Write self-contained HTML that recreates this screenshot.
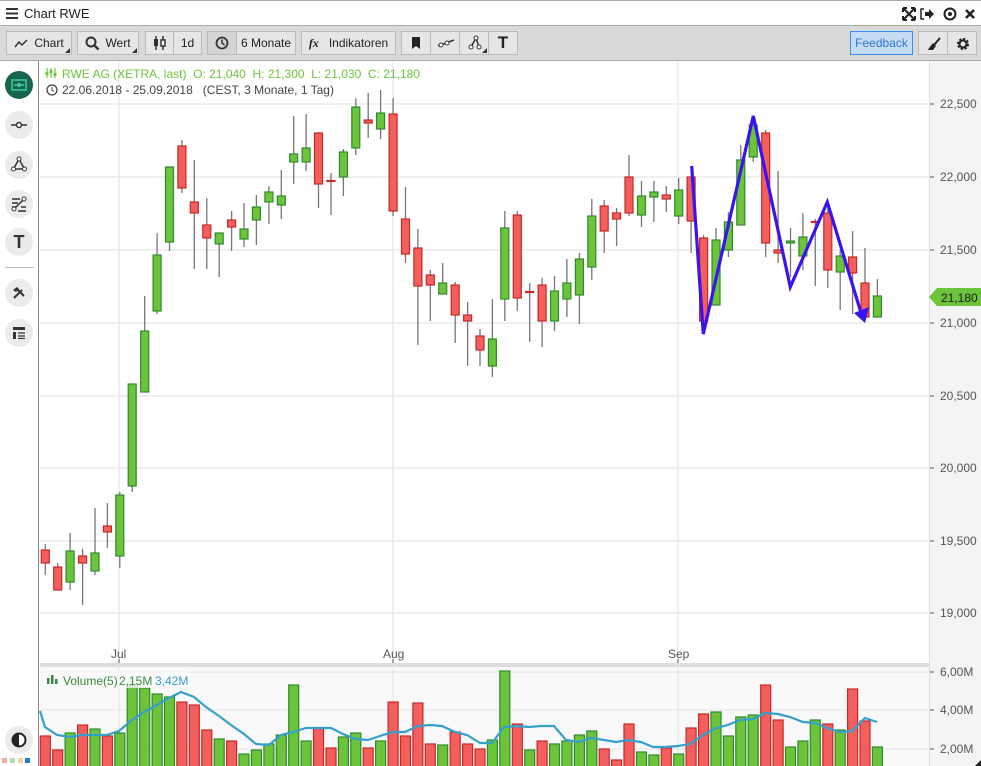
<!DOCTYPE html>
<html><head><meta charset="utf-8"><style>
*{margin:0;padding:0;box-sizing:border-box}
body{width:981px;height:766px;overflow:hidden;background:#fff;font-family:"Liberation Sans",sans-serif;position:relative}
.title{position:absolute;left:0;top:0;width:981px;height:26px;border-top:1px solid #aaa;border-bottom:1px solid #aaa;background:#fff}
.title span{position:absolute;left:24px;top:5px;font-size:13px;color:#222}
.tb{position:absolute;left:0;top:26px;width:981px;height:35px;background:#d9d9d9;border-bottom:1px solid #aaa}
.b{position:absolute;top:5px;height:24px;border:1px solid #bbb;background:#e6e6e6;font-size:12px;color:#222;line-height:22px;text-align:center}
.tri:after{content:"";position:absolute;right:1px;bottom:1px;border-left:5px solid transparent;border-bottom:5px solid #333}
.side{position:absolute;left:0;top:61px;width:39px;height:705px;background:#fff;border-right:1px solid #888}
.ci{position:absolute;left:5px;width:28px;height:28px;border-radius:50%;background:#ebebeb}
</style></head><body>
<div class="title">
<svg style="position:absolute;left:6px;top:7px" width="12" height="11"><rect y="0" width="12" height="2" fill="#333"/><rect y="4.5" width="12" height="2" fill="#333"/><rect y="9" width="12" height="2" fill="#333"/></svg>
<span>Chart RWE</span>
<svg style="position:absolute;left:902px;top:6px" width="76" height="14">
<g stroke="#222" stroke-width="2" fill="none"><path d="M2 2l10 10M12 2L2 12"/><path d="M1 1h4M1 1v4M13 1h-4M13 1v4M1 13h4M1 13v-4M13 13h-4M13 13v-4"/></g>
<path d="M22 2h-3v10h3" stroke="#222" stroke-width="1.5" fill="none"/><path d="M23 5h4v-3l5 5-5 5v-3h-4z" fill="#222"/>
<circle cx="48" cy="7" r="5.5" stroke="#222" stroke-width="2" fill="none"/><circle cx="48" cy="7" r="2" fill="#222"/>
<path d="M64 3l8 8M72 3l-8 8" stroke="#222" stroke-width="2.5"/>
</svg>
</div>
<div class="tb">
<div class="b tri" style="left:6px;width:66px"><svg style="position:absolute;left:7px;top:7px" width="14" height="9"><path d="M1 8l4-5 3 3 5-5" stroke="#333" stroke-width="1.5" fill="none"/></svg><span style="margin-left:20px">Chart</span></div>
<div class="b tri" style="left:77px;width:62px"><svg style="position:absolute;left:7px;top:4px" width="15" height="15"><circle cx="6" cy="6" r="4.5" stroke="#333" stroke-width="2" fill="none"/><path d="M9 9l4.5 4.5" stroke="#333" stroke-width="2.5"/></svg><span style="margin-left:20px">Wert</span></div>
<div class="b" style="left:145px;width:29px"><svg style="position:absolute;left:6px;top:4px" width="16" height="14"><path d="M4 0v14M11 0v14" stroke="#333" stroke-width="1.5"/><rect x="2" y="3" width="4" height="7" fill="#333"/><rect x="9" y="4" width="4" height="6" fill="#fff" stroke="#333" stroke-width="1.5"/></svg></div>
<div class="b" style="left:173px;width:29px">1d</div>
<div class="b" style="left:207px;width:30px;background:#d4d4d4"><svg style="position:absolute;left:7px;top:4px" width="14" height="14"><circle cx="7" cy="7" r="5.5" stroke="#333" stroke-width="1.8" fill="none"/><path d="M7 3.5v3.5l2.5 2" stroke="#333" stroke-width="1.5" fill="none"/></svg></div>
<div class="b" style="left:236px;width:60px">6 Monate</div>
<div class="b" style="left:301px;width:95px"><i style="font-family:'Liberation Serif',serif;font-weight:bold;margin-right:10px">fx</i>Indikatoren</div>
<div class="b" style="left:401px;width:30px"><svg style="position:absolute;left:10px;top:5px" width="9" height="12"><path d="M0 0h8v12l-4-3-4 3z" fill="#222"/></svg></div>
<div class="b" style="left:430px;width:30px"><svg style="position:absolute;left:6px;top:6px" width="18" height="10"><path d="M1 8l16-6" stroke="#333" stroke-width="1.5"/><circle cx="4" cy="7" r="2" fill="#fff" stroke="#333"/><circle cx="10" cy="5" r="2" fill="#fff" stroke="#333"/></svg></div>
<div class="b tri" style="left:459px;width:30px"><svg style="position:absolute;left:8px;top:3px" width="14" height="16"><path d="M8 3l-5 9M8 3l3 9" stroke="#333" stroke-width="1.5"/><circle cx="8" cy="3" r="2" fill="#fff" stroke="#333"/><circle cx="3" cy="12" r="2" fill="#fff" stroke="#333"/><circle cx="11" cy="12" r="2" fill="#fff" stroke="#333"/></svg></div>
<div class="b" style="left:488px;width:30px;font-weight:bold;font-size:17px">T</div>
<div class="b" style="left:850px;width:63px;background:#c6dcf2;border-color:#3a92f0;color:#2a78d8">Feedback</div>
<div class="b" style="left:918px;width:30px"><svg style="position:absolute;left:8px;top:5px" width="14" height="14"><path d="M13 1L7 8" stroke="#222" stroke-width="2"/><path d="M6 6l3 3-3 4-5 0 1-2z" fill="#222"/></svg></div>
<div class="b" style="left:947px;width:30px"><svg style="position:absolute;left:8px;top:5px" width="14" height="14"><circle cx="7" cy="7" r="4.5" fill="none" stroke="#222" stroke-width="3" stroke-dasharray="2.2 1.3"/><circle cx="7" cy="7" r="3.5" fill="none" stroke="#222" stroke-width="2"/></svg></div>
</div>
<div class="side">
<div class="ci" style="top:10px;background:#17654e"><svg style="position:absolute;left:6px;top:8px" width="16" height="12"><rect x="1" y="1" width="14" height="10" fill="none" stroke="#3ec99a" stroke-width="1.5"/><path d="M3 6h10" stroke="#3ec99a" stroke-width="1.5"/><circle cx="8" cy="6" r="2" fill="#3ec99a"/></svg></div>
<div class="ci" style="top:50px"><svg style="position:absolute;left:5px;top:9px" width="18" height="10"><path d="M1 5h16" stroke="#333" stroke-width="1.5"/><circle cx="9" cy="5" r="2.5" fill="#fff" stroke="#333" stroke-width="1.5"/></svg></div>
<div class="ci" style="top:90px"><svg style="position:absolute;left:6px;top:5px" width="16" height="16"><path d="M8 3L2.5 13h11z" fill="none" stroke="#333" stroke-width="1.5"/><circle cx="8" cy="3" r="2" fill="#fff" stroke="#333"/><circle cx="2.5" cy="13" r="2" fill="#fff" stroke="#333"/><circle cx="13.5" cy="13" r="2" fill="#fff" stroke="#333"/></svg></div>
<div class="ci" style="top:129px"><svg style="position:absolute;left:6px;top:6px" width="16" height="16"><path d="M1 3h8M1 7h6M1 11h4M7 15h8M10 11h5" stroke="#333" stroke-width="1.5"/><path d="M3 13L13 3" stroke="#333" stroke-width="1.5"/><circle cx="13" cy="3" r="2" fill="#fff" stroke="#333"/><circle cx="3" cy="13" r="2" fill="#fff" stroke="#333"/></svg></div>
<div class="ci" style="top:167px;font-weight:bold;font-size:18px;text-align:center;line-height:28px;color:#333">T</div>
<div style="position:absolute;left:5px;top:206px;width:29px;border-top:1px solid #bbb"></div>
<div class="ci" style="top:218px"><svg style="position:absolute;left:7px;top:7px" width="14" height="14"><path d="M2 12L10 4M4 2l8 8" stroke="#333" stroke-width="2"/><path d="M1 4l4-3 2 2-3 3z" fill="#333"/></svg></div>
<div class="ci" style="top:258px"><svg style="position:absolute;left:8px;top:8px" width="12" height="12"><rect x="0" y="0" width="12" height="3" fill="#333"/><rect x="0" y="5" width="3" height="7" fill="#333"/><path d="M5 6h7M5 9h7M5 11.5h7" stroke="#333" stroke-width="1.3"/></svg></div>
<div class="ci" style="top:665px"><svg style="position:absolute;left:6px;top:6px" width="16" height="16"><circle cx="8" cy="8" r="6.5" fill="#fff" stroke="#222" stroke-width="2"/><path d="M8 1.5a6.5 6.5 0 0 0 0 13z" fill="#222"/></svg></div>
</div>
<svg style="position:absolute;left:0;top:0" width="981" height="766">
<rect x="40" y="61" width="889" height="602" fill="#fff"/>
<rect x="929" y="61" width="52" height="705" fill="#f4f4f4"/>
<line x1="929.5" y1="61" x2="929.5" y2="766" stroke="#ddd"/>
<g stroke="#eaeaea" stroke-width="1.5">
<path d="M40 104H929M40 177H929M40 250H929M40 323H929M40 396H929M40 468H929M40 541H929M40 613H929"/>
<path d="M119 61V663M393 61V663M678 61V663"/>
</g>
<g fill="#555" font-size="12"><text x="940" y="108">22,500</text><text x="940" y="181">22,000</text><text x="940" y="254">21,500</text><text x="940" y="400">20,500</text><text x="940" y="472">20,000</text><text x="940" y="545">19,500</text><text x="940" y="617">19,000</text><text x="940" y="327">21,000</text>
<text x="111" y="658">Jul</text><text x="383" y="658">Aug</text><text x="668" y="658">Sep</text></g>
<g stroke="#555"><path d="M930 104h4M930 177h4M930 250h4M930 323h4M930 396h4M930 468h4M930 541h4M930 613h4M119 659v4M393 659v4M678 659v4"/></g>
<path d="M929 297l8-9h44v18h-44z" fill="#6cc43a"/><text x="941" y="302" font-size="12" fill="#1a1a1a">21,180</text>
<g fill="#6cc43a" font-size="12"><text x="62" y="78">RWE AG (XETRA, last)&#160; O: 21,040&#160; H: 21,300&#160; L: 21,030&#160; C: 21,180</text></g>
<g stroke="#6cc43a" stroke-width="1.2"><path d="M47 68v10M51 68v10M55 68v10"/></g><g fill="#6cc43a"><rect x="45.5" y="72" width="3" height="3"/><rect x="49.5" y="70" width="3" height="3"/><rect x="53.5" y="73" width="3" height="3"/></g>
<circle cx="52" cy="90" r="5" fill="none" stroke="#444" stroke-width="1.3"/><path d="M52 87v3l2 1.5" stroke="#444" fill="none"/>
<text x="62" y="94" font-size="12" fill="#444">22.06.2018 - 25.09.2018&#160;&#160; (CEST, 3 Monate, 1 Tag)</text>
<g stroke="#777" stroke-width="1.3">
<path d="M45.3 544V575M57.7 563V590M70.1 533V590M82.6 549V605M95 508V575M107.4 503V548M119.8 492V568M132.2 384V492M144.7 296V392M157.1 233V314M169.5 167V251M181.9 140V193M194.3 160V269M206.8 198V269M219.2 233V277M231.6 211V251M244 203V247M256.4 195V245M268.9 186V224M281.3 170V219M293.7 116V184M306.1 114V171M318.5 132V208M331 173V215M343.4 149V196M355.8 98V155M368.2 93V138M380.6 90V139M393.1 98V216M405.5 187V263M417.9 229V345M430.3 270V321M442.7 263V294M455.2 282V343M467.6 302V366M480 329V366M492.4 299V377M504.8 211V321M517.3 211V311M529.7 283V342M542.1 278V347M554.5 276V331M566.9 259V317M579.4 253V324M591.8 199V280M604.2 200V253M616.6 208V246M629 155V216M641.5 181V227M653.9 181V222M666.3 186V212M678.7 178V224M691.1 177V253M703.6 235V321M716 228V305M728.4 212V257M740.8 145V225M753.2 125V162M765.7 130V257M778.1 171V263M790.5 228V277M802.9 213V270M815.3 219V286M827.8 208V288M840.2 250V310M852.6 231V314M865 248V317M877.4 279V317"/>
</g>
<g fill="#f25f5c" stroke="#c62828" stroke-width="1.2">
<rect x="41.3" y="550" width="8" height="13"/><rect x="53.7" y="567" width="8" height="23"/><rect x="78.6" y="556" width="8" height="7"/><rect x="103.4" y="526" width="8" height="6"/><rect x="177.9" y="146" width="8" height="42"/><rect x="190.3" y="202" width="8" height="11"/><rect x="202.8" y="225" width="8" height="13"/><rect x="227.6" y="220" width="8" height="7"/><rect x="314.5" y="133" width="8" height="51"/><rect x="327" y="180.5" width="8" height="1"/><rect x="364.2" y="120" width="8" height="3"/><rect x="389.1" y="114" width="8" height="97"/><rect x="401.5" y="219" width="8" height="35"/><rect x="413.9" y="248" width="8" height="38"/><rect x="426.3" y="275" width="8" height="10"/><rect x="451.2" y="285" width="8" height="30"/><rect x="463.6" y="315" width="8" height="6"/><rect x="476" y="336" width="8" height="14"/><rect x="513.3" y="215" width="8" height="83"/><rect x="525.7" y="291.5" width="8" height="1"/><rect x="538.1" y="285" width="8" height="36"/><rect x="600.2" y="206" width="8" height="25"/><rect x="612.6" y="213" width="8" height="6"/><rect x="625" y="177" width="8" height="36"/><rect x="662.3" y="195" width="8" height="4"/><rect x="687.1" y="177" width="8" height="44"/><rect x="699.6" y="238" width="8" height="83"/><rect x="761.7" y="133" width="8" height="110"/><rect x="774.1" y="250" width="8" height="3"/><rect x="811.3" y="221.5" width="8" height="1"/><rect x="823.8" y="213" width="8" height="57"/><rect x="848.6" y="257" width="8" height="16"/><rect x="861" y="283" width="8" height="34"/>
</g>
<g fill="#6cc43a" stroke="#2e8b2e" stroke-width="1.2">
<rect x="66.1" y="551" width="8" height="31"/><rect x="91" y="553" width="8" height="18"/><rect x="115.8" y="495" width="8" height="61"/><rect x="128.2" y="384" width="8" height="102"/><rect x="140.7" y="331" width="8" height="61"/><rect x="153.1" y="255" width="8" height="56"/><rect x="165.5" y="167" width="8" height="75"/><rect x="215.2" y="233" width="8" height="11"/><rect x="240" y="229" width="8" height="10"/><rect x="252.4" y="207" width="8" height="13"/><rect x="264.9" y="192" width="8" height="10"/><rect x="277.3" y="196" width="8" height="9"/><rect x="289.7" y="154" width="8" height="8"/><rect x="302.1" y="148" width="8" height="14"/><rect x="339.4" y="152" width="8" height="25"/><rect x="351.8" y="107" width="8" height="41"/><rect x="376.6" y="113" width="8" height="16"/><rect x="438.7" y="283" width="8" height="11"/><rect x="488.4" y="339" width="8" height="27"/><rect x="500.8" y="228" width="8" height="71"/><rect x="550.5" y="291" width="8" height="30"/><rect x="562.9" y="283" width="8" height="16"/><rect x="575.4" y="259" width="8" height="36"/><rect x="587.8" y="216" width="8" height="51"/><rect x="637.5" y="196" width="8" height="19"/><rect x="649.9" y="192" width="8" height="5"/><rect x="674.7" y="190" width="8" height="26"/><rect x="712" y="240" width="8" height="65"/><rect x="724.4" y="222" width="8" height="28"/><rect x="736.8" y="160" width="8" height="65"/><rect x="749.2" y="125" width="8" height="32"/><rect x="786.5" y="241" width="8" height="2"/><rect x="798.9" y="237" width="8" height="19"/><rect x="836.2" y="256" width="8" height="16"/><rect x="873.4" y="296" width="8" height="21"/>
</g>
<polyline points="691.7,166 703.3,334 753.3,116 790.3,287 827.3,202 862,316" fill="none" stroke="#3a14ee" stroke-width="3.2" stroke-linejoin="miter"/>
<path d="M854 313L869 307L865 323z" fill="#3a14ee"/>
<rect x="40" y="663" width="889" height="4" fill="#ddd"/>
<rect x="40" y="667" width="889" height="99" fill="#f9f9f9"/>
<g stroke="#e2e2e2"><path d="M40 672H929M40 710H929M40 749H929M119 667V766M393 667V766M678 667V766"/></g>
<g fill="#555" font-size="12"><text x="940" y="676">6,00M</text><text x="940" y="714">4,00M</text><text x="940" y="753">2,00M</text></g>
<g stroke="#555"><path d="M930 672h4M930 710h4M930 749h4"/></g>
<g fill="#f25f5c" stroke="#c62828" stroke-width="1.2">
<rect x="40.3" y="736" width="10" height="32"/><rect x="52.7" y="750" width="10" height="18"/><rect x="77.6" y="725" width="10" height="43"/><rect x="102.4" y="736" width="10" height="32"/><rect x="176.9" y="702" width="10" height="66"/><rect x="189.3" y="705" width="10" height="63"/><rect x="201.8" y="730" width="10" height="38"/><rect x="226.6" y="741" width="10" height="27"/><rect x="313.5" y="728" width="10" height="40"/><rect x="326" y="748" width="10" height="20"/><rect x="363.2" y="748" width="10" height="20"/><rect x="388.1" y="702" width="10" height="66"/><rect x="400.5" y="736" width="10" height="32"/><rect x="412.9" y="703" width="10" height="65"/><rect x="425.3" y="744" width="10" height="24"/><rect x="450.2" y="732" width="10" height="36"/><rect x="462.6" y="744" width="10" height="24"/><rect x="475" y="749" width="10" height="19"/><rect x="512.3" y="724" width="10" height="44"/><rect x="537.1" y="741" width="10" height="27"/><rect x="599.2" y="749" width="10" height="19"/><rect x="611.6" y="760" width="10" height="8"/><rect x="624" y="724" width="10" height="44"/><rect x="661.3" y="748" width="10" height="20"/><rect x="686.1" y="728" width="10" height="40"/><rect x="698.6" y="714" width="10" height="54"/><rect x="760.7" y="685" width="10" height="83"/><rect x="773.1" y="720" width="10" height="48"/><rect x="822.8" y="724" width="10" height="44"/><rect x="847.6" y="689" width="10" height="79"/><rect x="860" y="721" width="10" height="47"/>
</g>
<g fill="#6cc43a" stroke="#2e8b2e" stroke-width="1.2">
<rect x="65.1" y="733" width="10" height="35"/><rect x="90" y="729" width="10" height="39"/><rect x="114.8" y="733" width="10" height="35"/><rect x="127.2" y="685" width="10" height="83"/><rect x="139.7" y="688" width="10" height="80"/><rect x="152.1" y="694" width="10" height="74"/><rect x="164.5" y="697" width="10" height="71"/><rect x="214.2" y="739" width="10" height="29"/><rect x="239" y="754" width="10" height="14"/><rect x="251.4" y="750" width="10" height="18"/><rect x="263.9" y="744" width="10" height="24"/><rect x="276.3" y="735" width="10" height="33"/><rect x="288.7" y="685" width="10" height="83"/><rect x="301.1" y="741" width="10" height="27"/><rect x="338.4" y="737" width="10" height="31"/><rect x="350.8" y="733" width="10" height="35"/><rect x="375.6" y="741" width="10" height="27"/><rect x="437.7" y="745" width="10" height="23"/><rect x="487.4" y="740" width="10" height="28"/><rect x="499.8" y="671" width="10" height="97"/><rect x="524.7" y="750" width="10" height="18"/><rect x="549.5" y="744" width="10" height="24"/><rect x="561.9" y="741" width="10" height="27"/><rect x="574.4" y="735" width="10" height="33"/><rect x="586.8" y="731" width="10" height="37"/><rect x="636.5" y="752" width="10" height="16"/><rect x="648.9" y="755" width="10" height="13"/><rect x="673.7" y="754" width="10" height="14"/><rect x="711" y="712" width="10" height="56"/><rect x="723.4" y="736" width="10" height="32"/><rect x="735.8" y="717" width="10" height="51"/><rect x="748.2" y="715" width="10" height="53"/><rect x="785.5" y="747" width="10" height="21"/><rect x="797.9" y="741" width="10" height="27"/><rect x="810.3" y="720" width="10" height="48"/><rect x="835.2" y="730" width="10" height="38"/><rect x="872.4" y="747" width="10" height="21"/>
</g>
<polyline points="40,711 45,727 57,735 70,737 82,735 95,735 107,735 119,731 132,720 144,712 157,705 169,698 181,692 194,697 206,707 219,716 231,725 244,734 256,744 269,745 281,735 293,732 306,728 318,728 331,728 343,734 356,739 368,740 380,736 393,732 405,732 418,726 430,725 442,726 455,732 467,735 480,743 492,743 504,727 517,726 529,727 541,726 554,726 566,740 579,742 591,738 604,740 616,742 628,740 641,742 653,747 665,747 678,746 690,744 703,735 716,728 728,725 740,720 753,719 765,713 778,714 790,717 803,722 815,723 827,728 840,732 852,731 865,718 877,722" fill="none" stroke="#34a0cc" stroke-width="2.2"/>
<rect x="43" y="671" width="145" height="17" fill="#fafafa" opacity="0.75"/>
<g fill="#3a8a3a"><rect x="47" y="678" width="2.5" height="6"/><rect x="51" y="675" width="2.5" height="9"/><rect x="55" y="679" width="2.5" height="5"/></g>
<text x="63" y="685" font-size="12" fill="#3a8a3a">Volume(5)</text>
<text x="119" y="685" font-size="12" fill="#3a8a3a">2,15M</text>
<text x="155" y="685" font-size="12" fill="#34a0cc">3,42M</text>
<g><rect x="2" y="758" width="5" height="5" fill="#f0b0a8"/><rect x="10" y="758" width="5" height="5" fill="#b8dca8"/><rect x="18" y="758" width="5" height="5" fill="#e8d8a0"/><rect x="25" y="758" width="5" height="5" fill="#1a7ad8"/></g>
<path d="M975 766l6-6v6z" fill="#222"/>
</svg>
</body></html>
